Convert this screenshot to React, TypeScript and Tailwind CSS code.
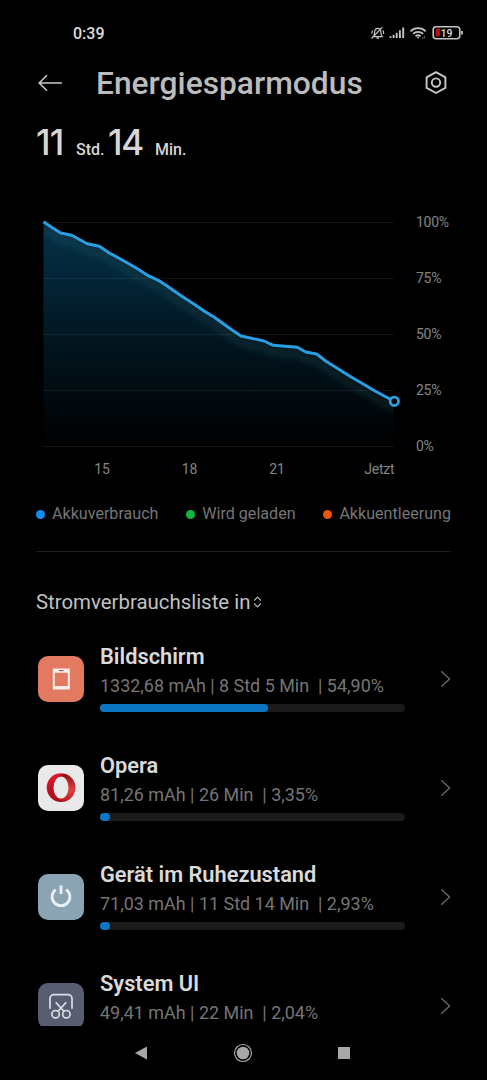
import React from 'react';

interface UsageItem {
  name: string;
  details: string;
  fill: number;
  iconClasses: string;
  icon: React.ReactNode;
}

const curve =
  '43.5,221.7 51.7,227.3 60.7,233 71.7,235.3 87.3,243.7 99.3,246.3 109.3,253 120,258.7 136.7,268.3 148.3,275.7 158.3,280.3 166.7,285.7 180,295 195,304.7 204,311 214,317 231.7,329.7 241,336 264,341 273.3,345.3 297.3,347.3 305.7,352 316.7,354 326,361.3 350,376.3 375,391 394,401.3';

const ScreenIcon = () => (
  <svg width="46" height="46" viewBox="0 0 46 46">
    <path fillRule="evenodd" fill="#f6ebe8" d="M14.8 12.5h17v21h-17zM16.8 16.7v13.2h13V16.7z" />
    <path d="M21 14.6h4.6" stroke="#8a5044" strokeWidth="1" />
  </svg>
);

const OperaIcon = () => (
  <svg width="46" height="46" viewBox="0 0 46 46">
    <defs>
      <linearGradient id="opera-left" x1="0" y1="0" x2="0" y2="1">
        <stop offset="0" stopColor="#e0192c" />
        <stop offset="1" stopColor="#a80b18" />
      </linearGradient>
      <linearGradient id="opera-right" x1="0" y1="0" x2="0" y2="1">
        <stop offset="0" stopColor="#8f0d12" />
        <stop offset="0.6" stopColor="#e2423f" />
        <stop offset="1" stopColor="#b81c20" />
      </linearGradient>
    </defs>
    <circle cx="23" cy="22.6" r="14.3" fill="url(#opera-left)" />
    <path d="M18.5 13.1C20.5 10.3 23.5 9.3 27 8.9A14.300 14.300 0 0 1 27 36.3C23.5 35.9 20.5 34.9 18.5 32.1Z" fill="url(#opera-right)" />
    <ellipse cx="23" cy="22.6" rx="7.5" ry="11" fill="#e9e9e9" />
  </svg>
);

const PowerIcon = () => (
  <svg width="46" height="46" viewBox="0 0 46 46" fill="none" stroke="#eaf0f4" strokeWidth="2.8">
    <path d="M17.8 15.6a8.900 8.900 0 1 0 10.400 0" />
    <path d="M23 11.6v8.4" />
  </svg>
);

const ScissorsIcon = () => (
  <svg width="46" height="46" viewBox="0 0 46 46" fill="none" stroke="#dfe0e6" strokeWidth="1.7">
    <path d="M12 25.800v-10.300a3.800 3.800 0 0 1 3.800-3.800h14.400a3.800 3.800 0 0 1 3.800 3.800v10.300" />
    <path d="M17.700 19.300l8.200 9M28.300 19.300l-8.200 9" />
    <circle cx="17.600" cy="31.200" r="3.700" />
    <circle cx="28.400" cy="31.200" r="3.700" />
  </svg>
);

const items: UsageItem[] = [
  { name: 'Bildschirm', details: '1332,68 mAh | 8 Std 5 Min  | 54,90%', fill: 168, iconClasses: 'bg-[#e27a61]', icon: <ScreenIcon /> },
  { name: 'Opera', details: '81,26 mAh | 26 Min  | 3,35%', fill: 10, iconClasses: 'bg-[#e9e9e9]', icon: <OperaIcon /> },
  { name: 'Gerät im Ruhezustand', details: '71,03 mAh | 11 Std 14 Min  | 2,93%', fill: 10, iconClasses: 'bg-[#8ba4b4]', icon: <PowerIcon /> },
  { name: 'System UI', details: '49,41 mAh | 22 Min  | 2,04%', fill: 8, iconClasses: 'bg-[#585d72]', icon: <ScissorsIcon /> },
];

const StatusBar = () => (
  <div className="h-[65px] shrink-0 flex items-center justify-between pl-[73px] pr-[23px] pt-px">
    <span className="mt-0.5 text-base font-medium text-[#dcdcdc]">0:39</span>
    <svg width="94" height="16" viewBox="370 25 94 16" fill="none" stroke="#c4c4c4">
      {/* Muted bell */}
      <path strokeWidth="1.2" d="M373.2 36.6c1.1-1 1.4-2 1.4-4 0-2.3 1.2-4.2 3.2-4.2s3.1 1.9 3.1 4.2c0 2 .3 3 1.4 4zM376.5 38.2h2.6M371.6 38.5l10.8-11.4M372.4 30.5l-.6 3M383.2 30.5l.5 3.5" />
      {/* Signal */}
      <path strokeWidth="1.9" d="M390.5 38v-1.7M393.6 38v-3.2M396.7 38v-5.3M399.900 38v-7.700M403.200 38V27.500" />
      {/* Wifi */}
      <path strokeWidth="1.7" d="M410.5 31.3a10.8 10.8 0 0 1 15.2 0M413.1 33.9a7 7 0 0 1 10 0M415.6 36.3a3.6 3.6 0 0 1 5 0" />
      <circle cx="418.1" cy="37.6" r="1" fill="#c4c4c4" stroke="none" />
      <path strokeWidth="1" stroke="#777777" d="M424.3 36v2.5M422.8 37.4v1.4" />
      {/* Battery */}
      <rect x="433.2" y="26.700" width="26.600" height="12" rx="3" strokeWidth="1.6" />
      <path strokeWidth="1.8" d="M462 31v3.600" />
      <rect x="435.6" y="28.800" width="4.300" height="7.800" rx="1" fill="#c40a12" stroke="none" />
      <text x="440.6" y="36.500" fontSize="10.500" fontWeight="500" fill="#dddddd" stroke="none">19</text>
    </svg>
  </div>
);

const Chart = () => (
  <div className="mt-[48px] flex">
    <div>
      <svg className="block" width="364" height="238" viewBox="36 212 364 238" fill="none">
        <defs>
          <linearGradient id="area" gradientUnits="userSpaceOnUse" x1="0" y1="222" x2="0" y2="446">
            <stop offset="0" stopColor="#063148" />
            <stop offset="0.25" stopColor="#032538" />
            <stop offset="0.5" stopColor="#021722" />
            <stop offset="0.78" stopColor="#01090f" />
            <stop offset="1" stopColor="#000000" />
          </linearGradient>
          <clipPath id="area-clip">
            <polygon points={`43.5,446 ${curve} 394,446`} />
          </clipPath>
          <filter id="soften" x="-10%" y="-10%" width="120%" height="120%">
            <feGaussianBlur stdDeviation="2" />
          </filter>
        </defs>
        <polygon points={`43.5,446 ${curve} 394,446`} fill="url(#area)" />
        <g clipPath="url(#area-clip)">
          <polyline points={curve} transform="translate(0 7)" filter="url(#soften)" stroke="#1f6a70" strokeOpacity="0.15" strokeWidth="10" />
        </g>
        <path d="M43 222.5h351M43 278.5h351M43 334.5h351M43 390.5h351M43 446.5h351" stroke="#ffffff" strokeOpacity="0.07" />
        <polyline points={curve} stroke="#2a9ee2" strokeWidth="3" strokeLinejoin="round" />
        <circle cx="394.3" cy="401.3" r="4.2" fill="#000000" stroke="#2a9ee2" strokeWidth="2.8" />
      </svg>
      <div className="mt-[11px] flex pl-[50px] text-sm leading-4 tracking-[-0.2px] text-[#858585]">
        <span className="w-8 text-center">15</span>
        <span className="ml-[55.5px] w-8 text-center">18</span>
        <span className="ml-[55.5px] w-8 text-center">21</span>
        <span className="ml-auto mr-[5.5px]">Jetzt</span>
      </div>
    </div>
    <div className="ml-4 mt-0.5 flex flex-col gap-10 text-sm leading-4 tracking-[-0.3px] text-[#858585]">
      <span>100%</span>
      <span>75%</span>
      <span>50%</span>
      <span>25%</span>
      <span>0%</span>
    </div>
  </div>
);

const Legend = () => (
  <div className="mt-[25px] flex items-center justify-between text-[16.1px] leading-6 text-[#757575]">
    <div className="flex items-center gap-[7px]">
      <span className="size-[9px] rounded-full bg-[#0f8df0]" />
      <span>Akkuverbrauch</span>
    </div>
    <div className="flex items-center gap-[7px]">
      <span className="size-[9px] rounded-full bg-[#10b73f]" />
      <span>Wird geladen</span>
    </div>
    <div className="flex items-center gap-[7px]">
      <span className="size-[9px] rounded-full bg-[#ee5510]" />
      <span>Akkuentleerung</span>
    </div>
  </div>
);

const UsageRow: React.FC<{ item: UsageItem }> = ({ item }) => (
  <li className="h-[109px] shrink-0 flex">
    <div className={`ml-0.5 mt-3.5 size-[46px] shrink-0 overflow-hidden rounded-[10px] ${item.iconClasses}`}>{item.icon}</div>
    <div className="ml-4 w-[305px] shrink-0">
      <h3 className="text-[21.8px] leading-[30px] font-semibold text-[#dadada]">{item.name}</h3>
      <p className="whitespace-pre text-[17.95px] leading-7 text-[#757575]">{item.details}</p>
      <div className="mt-1 h-[7.5px] rounded-full bg-[#1b1b1b]">
        <div className="h-full rounded-full bg-[#0d76c2]" style={{ width: item.fill }} />
      </div>
    </div>
    <svg className="ml-[34.5px] mt-7 shrink-0" width="12" height="18" viewBox="0 0 12 18" fill="none" stroke="#6a6a6a" strokeWidth="1.3">
      <path d="M1.2 1.2L9.6 9 1.2 16.8" />
    </svg>
  </li>
);

const App: React.FC = () => {
  return (
    <div className="flex h-[1080px] w-[487px] flex-col overflow-hidden bg-black font-['Roboto',sans-serif]">
      <StatusBar />

      <main className="flex h-[961px] shrink-0 flex-col overflow-hidden px-9">
        <header className="flex h-9 shrink-0 items-center">
          <svg width="26" height="18" viewBox="0 0 26 18" fill="none" stroke="#c8c8c8" strokeWidth="1.6">
            <path d="M26 9H3.500M11 1.200L3.200 9 11 16.800" />
          </svg>
          <h1 className="ml-[34px] mt-0.5 text-[31.75px] leading-9 font-medium text-[#bcbcbc]">Energiesparmodus</h1>
          <svg className="ml-auto mr-[3px]" width="24" height="24" viewBox="0 0 24 24" fill="none" stroke="#c8c8c8" strokeWidth="1.9">
            <path strokeLinejoin="round" d="M12 1.2l9.4 5.2v10.400L12 22l-9.400-5.200V6.400z" />
            <circle cx="12" cy="11.6" r="4.2" />
          </svg>
        </header>

        <div className="mt-[19px] flex h-11 shrink-0 items-baseline text-[#d6d6d6]">
          <span className="w-10 font-['Inter',sans-serif] text-[35px] leading-[44px] font-medium tracking-[-0.8px]">11</span>
          <span className="w-8 text-base font-medium">Std.</span>
          <span className="w-[47px] font-['Inter',sans-serif] text-[35px] leading-[44px] font-medium tracking-[-1.2px]">14</span>
          <span className="text-base font-medium">Min.</span>
        </div>

        <Chart />
        <Legend />
        <div className="mt-[25px] h-px shrink-0 bg-[#1c1c1c]" />

        <div className="mt-[35px] flex h-[30px] shrink-0 items-center text-[20.4px] text-[#c2c2c2]">
          <span>Stromverbrauchsliste in</span>
          <svg className="ml-[3px]" width="9" height="12" viewBox="0 0 9 12" fill="none" stroke="#b0b0b0" strokeWidth="1.2">
            <path d="M1.2 4.500l3.300-3.300 3.300 3.300M1.200 7.500l3.300 3.300 3.300-3.300" />
          </svg>
        </div>

        <ul className="mt-[25px] flex flex-col">
          {items.map(item => <UsageRow key={item.name} item={item} />)}
        </ul>
      </main>

      {/* System navigation */}
      <nav className="flex h-[54px] shrink-0 items-center justify-between pb-px pl-[134px] pr-[137px]">
        <svg width="14" height="14" viewBox="0 0 14 14">
          <path d="M1 7L13 .4v13.200z" fill="#a8a8a8" />
        </svg>
        <svg width="20" height="20" viewBox="0 0 20 20">
          <circle cx="10" cy="10" r="8.5" fill="none" stroke="#a8a8a8" strokeWidth="1.2" />
          <circle cx="10" cy="10" r="6.3" fill="#a8a8a8" />
        </svg>
        <div className="size-3 bg-[#a8a8a8]" />
      </nav>
    </div>
  );
};

export default App;
